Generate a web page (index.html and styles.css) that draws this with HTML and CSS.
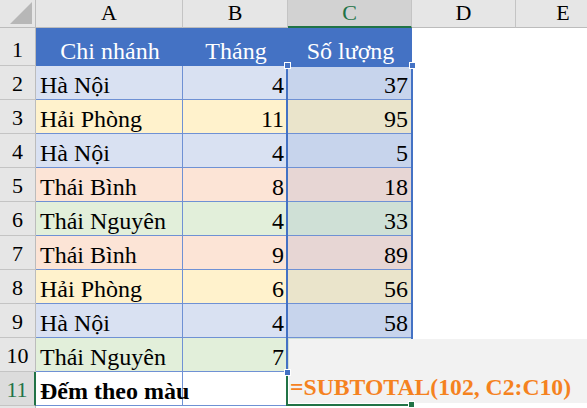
FILE: index.html
```html
<!DOCTYPE html>
<html>
<head>
<meta charset="utf-8">
<link rel="stylesheet" href="styles.css">
</head>
<body>
<div class="sheet">
  <div class="corner"><span class="tri"></span></div>
  <div class="ch">A</div>
  <div class="ch">B</div>
  <div class="ch ch-act">C</div>
  <div class="ch">D</div>
  <div class="ch">E</div>

  <div class="rn">1</div>
  <div class="cell th">Chi nhánh</div>
  <div class="cell th">Tháng</div>
  <div class="cell th">Số lượng</div>
  <div class="cell"></div>
  <div class="cell"></div>

  <div class="rn">2</div>
  <div class="cell tb blue">Hà Nội</div>
  <div class="cell tb blue num">4</div>
  <div class="cell tb blue sel num">37</div>
  <div class="cell"></div>
  <div class="cell"></div>

  <div class="rn">3</div>
  <div class="cell tb yellow">Hải Phòng</div>
  <div class="cell tb yellow num">11</div>
  <div class="cell tb yellow sel num">95</div>
  <div class="cell"></div>
  <div class="cell"></div>

  <div class="rn">4</div>
  <div class="cell tb blue">Hà Nội</div>
  <div class="cell tb blue num">4</div>
  <div class="cell tb blue sel num">5</div>
  <div class="cell"></div>
  <div class="cell"></div>

  <div class="rn">5</div>
  <div class="cell tb peach">Thái Bình</div>
  <div class="cell tb peach num">8</div>
  <div class="cell tb peach sel num">18</div>
  <div class="cell"></div>
  <div class="cell"></div>

  <div class="rn">6</div>
  <div class="cell tb green">Thái Nguyên</div>
  <div class="cell tb green num">4</div>
  <div class="cell tb green sel num">33</div>
  <div class="cell"></div>
  <div class="cell"></div>

  <div class="rn">7</div>
  <div class="cell tb peach">Thái Bình</div>
  <div class="cell tb peach num">9</div>
  <div class="cell tb peach sel num">89</div>
  <div class="cell"></div>
  <div class="cell"></div>

  <div class="rn">8</div>
  <div class="cell tb yellow">Hải Phòng</div>
  <div class="cell tb yellow num">6</div>
  <div class="cell tb yellow sel num">56</div>
  <div class="cell"></div>
  <div class="cell"></div>

  <div class="rn">9</div>
  <div class="cell tb blue">Hà Nội</div>
  <div class="cell tb blue num">4</div>
  <div class="cell tb blue sel num">58</div>
  <div class="cell"></div>
  <div class="cell"></div>

  <div class="rn">10</div>
  <div class="cell tb green">Thái Nguyên</div>
  <div class="cell tb green num">7</div>
  <div class="cell tb green sel num"></div>
  <div class="cell"></div>
  <div class="cell"></div>

  <div class="rn rn-act">11</div>
  <div class="cell tb white bold">Đếm theo màu</div>
  <div class="cell tb white"></div>
  <div class="cell"></div>
  <div class="cell"></div>
  <div class="cell"></div>

  <div class="rn"></div>
  <div class="cell"></div>
  <div class="cell"></div>
  <div class="cell"></div>
  <div class="cell"></div>
  <div class="cell"></div>

  <div class="range"></div>
  <div class="active"></div>
  <div class="editbox">=SUBTOTAL(102, C2:C10)</div>
  <span class="handle h1"></span>
  <span class="handle h2"></span>
  <span class="handle h3"></span>
  <span class="fill"></span>
</div>
</body>
</html>
```

FILE: styles.css
```css
html, body {
  margin: 0;
  padding: 0;
  background: #ffffff;
  overflow: hidden;
}

.sheet {
  position: relative;
  display: grid;
  grid-template-columns: 36px 147px 105px 124px 104px 95px;
  grid-template-rows: 28px 38px repeat(10, 34px) 34px;
  font-family: "Liberation Serif", "Times New Roman", Times, "Nimbus Roman", "FreeSerif", "Noto Serif", "DejaVu Serif", serif;
  color: #000;
  width: 587px;
  height: 408px;
  overflow: hidden;
}

.corner {
  position: relative;
  background: #e6e6e6;
  border-right: 1px solid #bcbcbc;
  border-bottom: 1px solid #bcbcbc;
  box-sizing: border-box;
}

.tri {
  position: absolute;
  right: 3px;
  bottom: 3px;
  width: 0;
  height: 0;
  border-left: 22px solid transparent;
  border-bottom: 22px solid #b7b7b7;
}

.ch {
  background: #e6e6e6;
  border-right: 1px solid #c4c4c4;
  border-bottom: 1px solid #bcbcbc;
  box-sizing: border-box;
  display: flex;
  align-items: flex-end;
  justify-content: center;
  font-size: 22px;
  padding-bottom: 1px;
}

.ch-act {
  background: #d2d2d2;
  color: #217346;
  border-bottom: 2px solid #217346;
  padding-bottom: 0;
}

.rn {
  background: #e6e6e6;
  border-right: 1px solid #bcbcbc;
  border-bottom: 1px solid #c4c4c4;
  box-sizing: border-box;
  display: flex;
  align-items: flex-end;
  justify-content: center;
  font-size: 22px;
  padding-bottom: 2px;
}

.rn-act {
  background: #dcdcdc;
  color: #217346;
  border-right: 2px solid #217346;
}

.cell {
  box-sizing: border-box;
  display: flex;
  align-items: flex-end;
  font-size: 24px;
  white-space: nowrap;
  overflow: hidden;
  padding: 0 3px 0 4px;
}

.th {
  background: #4472c4;
  color: #ffffff;
  justify-content: center;
  padding-bottom: 1px;
}

.tb {
  border-right: 1px solid #6f91d4;
  border-bottom: 1px solid #6f91d4;
}

.num {
  justify-content: flex-end;
}

.bold {
  font-weight: bold;
  overflow: visible;
  position: relative;
  z-index: 1;
}

.blue { background: #d9e1f2; }
.yellow { background: #fff2cc; }
.peach { background: #fce4d6; }
.green { background: #e2efda; }
.white { background: #ffffff; }

.blue.sel { background: #c7d4ec; }
.yellow.sel { background: #eae4cb; }
.peach.sel { background: #e7d6d4; }
.green.sel { background: #cfe0d6; }

.range {
  position: absolute;
  left: 286px;
  top: 65px;
  width: 127px;
  height: 308px;
  border: 2px solid #4472c4;
  box-sizing: border-box;
}

.active {
  position: absolute;
  left: 286px;
  top: 371px;
  width: 126px;
  height: 35px;
  border: 2px solid #217346;
  box-sizing: border-box;
  z-index: 2;
}

.editbox {
  position: absolute;
  left: 289px;
  top: 339px;
  right: 0;
  height: 64px;
  background: #f2f2f2;
  color: #f5821f;
  font-weight: bold;
  font-size: 23.7px;
  display: flex;
  align-items: flex-end;
  padding: 0 0 2px 1px;
  box-sizing: border-box;
  white-space: nowrap;
  z-index: 3;
}

.handle {
  position: absolute;
  width: 7px;
  height: 7px;
  background: #4472c4;
  border: 1px solid #ffffff;
  box-sizing: border-box;
  z-index: 4;
}

.h1 { left: 284px; top: 62px; }
.h2 { left: 409px; top: 62px; }
.h3 { left: 284px; top: 369px; }

.fill {
  position: absolute;
  left: 408px;
  top: 401px;
  width: 7px;
  height: 7px;
  background: #217346;
  border: 1px solid #ffffff;
  box-sizing: border-box;
  z-index: 4;
}
```
